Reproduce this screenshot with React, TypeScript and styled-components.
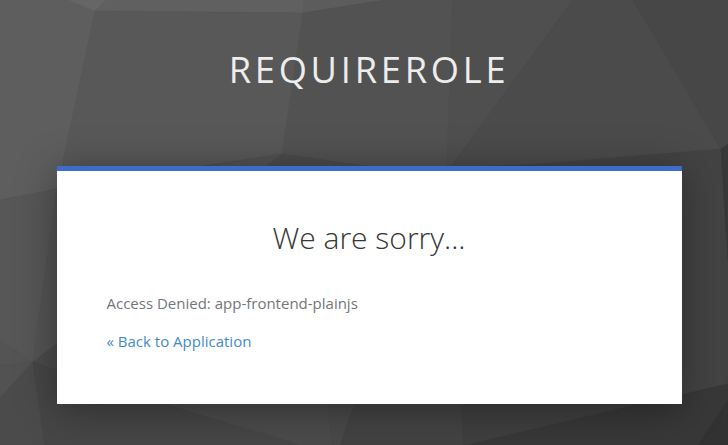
import React from "react";
import styled, { createGlobalStyle } from "styled-components";

const GlobalStyle = createGlobalStyle`
  * { box-sizing: border-box; }
  body {
    margin: 0;
    background: #4c4c4c;
    font-family: "Open Sans", "Noto Sans", sans-serif;
  }
`;

const Page = styled.div`
  position: relative;
  isolation: isolate;
  display: flex;
  flex-direction: column;
  align-items: center;
  width: 728px;
  height: 445px;
  padding-left: 10px;
  overflow: hidden;
`;

const Backdrop = styled.svg`
  position: absolute;
  inset: 0;
  z-index: -1;
`;

const Header = styled.header`
  height: 166px;
  padding-top: 45px;
  color: #ededed;
  font-size: 36.25px;
  font-weight: 400;
  line-height: 49px;
  letter-spacing: 3.75px;
  text-transform: uppercase;
`;

const Card = styled.main`
  width: 625px;
  height: 238px;
  padding: 47px 50px 0;
  border-top: 5px solid #3f6bcb;
  background: #fff;
  box-shadow: 0 5px 38px rgba(0, 0, 0, 0.37);
`;

const Title = styled.h1`
  margin: 0 0 33px;
  color: #363636;
  font-size: 30px;
  font-weight: 300;
  line-height: 40px;
  text-align: center;
`;

const Message = styled.p`
  margin: 0 0 14px;
  color: #72767b;
  font-size: 15px;
  line-height: 24px;
`;

const BackLink = styled.a`
  display: inline-block;
  color: #428bca;
  font-size: 15px;
  line-height: 24px;
  text-decoration: none;
`;

const facets: [string, string][] = [
  ["0,0 68,0 95,11 62,166 57,189 0,200", "#5e5e5e"],
  ["68,0 107,0 95,11", "#666666"],
  ["107,0 303,0 303,13 95,11", "#606060"],
  ["303,0 385,0 303,13", "#5c5c5c"],
  ["95,11 303,13 282,154 200,166 62,166", "#585858"],
  ["303,13 385,0 453,0 447,168 380,168 282,154", "#525252"],
  ["453,0 573,0 450,168 447,168", "#4f4f4f"],
  ["573,0 633,0 721,149 540,166 450,168", "#4b4b4b"],
  ["633,0 728,0 728,144 721,149", "#474747"],
  ["200,168 282,154 265,168", "#525252"],
  ["265,168 282,154 380,168", "#4b4b4b"],
  ["450,168 540,164 721,149 728,260 728,384 660,398", "#434343"],
  ["721,149 728,144 728,260", "#383838"],
  ["0,200 57,189 33,362 0,340", "#575757"],
  ["0,340 33,362 0,366", "#545454"],
  ["57,189 80,180 80,326 33,362", "#545454"],
  ["33,362 80,326 80,378", "#4b4b4b"],
  ["0,366 33,362 0,398", "#525252"],
  ["0,398 33,362 45,445 0,445", "#4b4b4b"],
  ["33,362 80,378 165,404 300,445 45,445", "#464646"],
  ["165,400 327,400 333,445 300,445", "#4b4b4b"],
  ["327,400 356,400 340,445 333,445", "#494949"],
  ["356,400 461,400 464,445 340,445", "#434343"],
  ["461,400 655,400 467,445 464,445", "#3f3f3f"],
  ["467,445 644,403 728,384 728,400 698,445", "#383838"],
  ["728,400 728,445 698,445", "#323232"],
];

const App: React.FC = () => (
  <>
    <GlobalStyle />
    <Page>
      <Backdrop width="728" height="445" viewBox="0 0 728 445" aria-hidden="true">
        {facets.map(([points, fill]) => (
          <polygon key={points} points={points} fill={fill} stroke={fill} strokeWidth="0.5" />
        ))}
      </Backdrop>
      <Header>RequireRole</Header>
      <Card>
        <Title>We are sorry...</Title>
        <Message>Access Denied: app-frontend-plainjs</Message>
        <BackLink href="#">« Back to Application</BackLink>
      </Card>
    </Page>
  </>
);

export default App;
